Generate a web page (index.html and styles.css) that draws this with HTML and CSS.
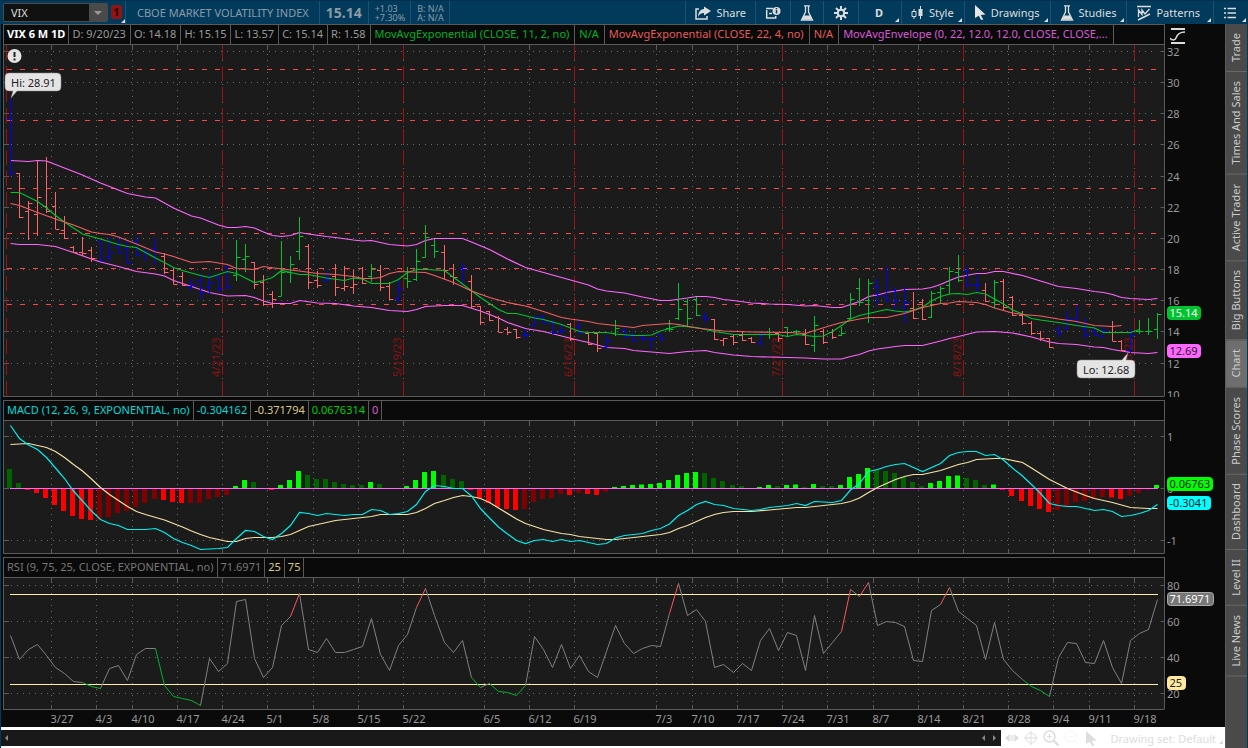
FILE: index.html
```html
<!DOCTYPE html>
<html lang="en">
  <head>
    <meta charset="UTF-8" />
    <meta name="viewport" content="width=device-width, initial-scale=1.0" />
    <title>VIX - Charts</title>
    <link rel="stylesheet" href="styles.css">
  </head>
  <body>
    <header class="topbar">
      <form class="symbol">
        <input type="text" class="symbol-input" value="VIX" aria-label="Symbol" />
        <button type="button" class="symbol-arrow" aria-label="Recent symbols"></button>
      </form>
      <button type="button" class="link-color has-menu" aria-label="Link color 1">1</button>
      <div class="quote-name">CBOE MARKET VOLATILITY INDEX</div>
      <div class="quote-last">15.14</div>
      <div class="quote-pair"><span>+1.03</span><span>+7.30%</span></div>
      <div class="quote-pair"><span>B: N/A</span><span>A: N/A</span></div>
      <nav class="tools">
        <button type="button" class="tool">
          <svg width="16" height="16" viewBox="0 0 16 16"><path d="M4 4H1v10h11v-3" fill="none" stroke="#ddd" stroke-width="1.5" /><path d="M9 1.500L16 6l-7 4.500V8C6 8 4 9.500 3 12c0-4 2-8 6-8z" fill="#ddd" /></svg>
          Share
        </button>
        <button type="button" class="tool" aria-label="Calendar">
          <svg width="16" height="16" viewBox="0 0 16 16"><path d="M1.700 5v8h9v-2M1 3.500h7M4 8.500h3" fill="none" stroke="#ddd" stroke-width="1.500" /><circle cx="11.500" cy="6" r="4" fill="#ddd" /><path d="M11.500 5v3.500M11.500 3v1.200" stroke="#023a5c" stroke-width="1.500" fill="none" /></svg>
        </button>
        <button type="button" class="tool" aria-label="Edit studies">
          <svg width="14" height="16" viewBox="0 0 14 16"><path d="M4 .8h6M5.500 1v6L1.500 15h11L8.500 7V1" fill="none" stroke="#ddd" stroke-width="1.300" /><path d="M4 10.500h6l2 4H2z" fill="#ddd" /></svg>
        </button>
        <button type="button" class="tool tool-gear" aria-label="Chart settings">
          <svg width="14" height="14" viewBox="0 0 14 14"><g stroke="#ddd" stroke-width="2"><path d="M7 0v3.500M7 10.500V14M0 7h3.500M10.500 7H14M2 2l2.500 2.500M9.500 9.500L12 12M12 2L9.500 4.500M4.500 9.500L2 12" /></g><circle cx="7" cy="7" r="3.200" fill="none" stroke="#ddd" stroke-width="2" /></svg>
        </button>
        <button type="button" class="tool tool-period has-menu">D</button>
        <button type="button" class="tool has-menu">
          <svg width="13" height="14" viewBox="0 0 13 14"><path d="M3 3v10M9.500 0v13" stroke="#ddd" /><path d="M1 5.500h4v5H1z" fill="#023a5c" stroke="#ddd" /><path d="M7.500 3h4v7h-4z" fill="#ddd" /></svg>
          Style
        </button>
        <button type="button" class="tool has-menu">
          <svg width="12" height="15" viewBox="0 0 12 15"><path d="M1 0l10.500 9.500-4.800.6L9.300 14.500l-2.200.5-2.300-4.300L1 13z" fill="#e6e6e6" /></svg>
          Drawings
        </button>
        <button type="button" class="tool has-menu">
          <svg width="14" height="16" viewBox="0 0 14 16"><path d="M4 .8h6M5.500 1v6L1.500 15h11L8.500 7V1" fill="none" stroke="#ddd" stroke-width="1.300" /><path d="M4 10.500h6l2 4H2z" fill="#ddd" /></svg>
          Studies
        </button>
        <button type="button" class="tool tool-wide has-menu">
          <svg width="14" height="16" viewBox="0 0 14 16"><path d="M0 1.500h14M1 15l12-6" stroke="#ddd" stroke-width="1.500" /><path d="M1.500 12V5l3.500 4.500V5l3 4 4.500-5" fill="none" stroke="#ddd" stroke-width="1.300" /></svg>
          Patterns
        </button>
        <button type="button" class="tool tool-list has-menu" aria-label="List">
          <svg width="12" height="12" viewBox="0 0 12 12"><path d="M0 1.500h2M0 6h2M0 10.500h2M3.500 1.500H12M3.500 6H12M3.500 10.500H12" stroke="#ddd" stroke-width="1.500" /></svg>
        </button>
      </nav>
    </header>

    <div class="workspace">
      <main class="charts">
        <section class="panel">
          <div class="legend-row">
            <div class="legend">
              <b>VIX 6 M 1D</b>
              <span>D: 9/20/23</span>
              <span>O: 14.18</span>
              <span>H: 15.15</span>
              <span>L: 13.57</span>
              <span>C: 15.14</span>
              <span>R: 1.58</span>
              <span class="study green">MovAvgExponential (CLOSE, 11, 2, no)</span>
              <span class="study green">N/A</span>
              <span class="study red">MovAvgExponential (CLOSE, 22, 4, no)</span>
              <span class="study red">N/A</span>
              <span class="study magenta">MovAvgEnvelope (0, 22, 12.0, 12.0, CLOSE, CLOSE,...</span>
            </div>
            <button type="button" class="scale-button" aria-label="Price axis settings">
              <svg width="16" height="16" viewBox="0 0 16 16"><path d="M1 1h14M1 15h14" stroke="#ddd" stroke-width="2" /><path d="M0 10c1 2 5 3 6 0s3-6 9-6" fill="none" stroke="#ddd" stroke-width="1.500" /></svg>
            </button>
          </div>
          <svg class="plot plot-price" id="price"></svg>
        </section>

        <section class="panel">
          <div class="legend-row">
            <div class="legend">
              <span class="cyan">MACD (12, 26, 9, EXPONENTIAL, no)</span>
              <span class="cyan">-0.304162</span>
              <span class="sand">-0.371794</span>
              <span class="lime">0.0676314</span>
              <span class="magenta">0</span>
            </div>
          </div>
          <svg class="plot plot-macd" id="macd"></svg>
        </section>

        <section class="panel">
          <div class="legend-row">
            <div class="legend">
              <span class="dim">RSI (9, 75, 25, CLOSE, EXPONENTIAL, no)</span>
              <span class="dim">71.6971</span>
              <span class="sand">25</span>
              <span class="sand">75</span>
            </div>
          </div>
          <svg class="plot plot-rsi" id="rsi"></svg>
        </section>

        <footer class="bottombar">
          <div class="scrollbar">
            <button type="button" class="arrow-left" aria-label="Scroll to start"></button>
            <span class="track"></span>
            <button type="button" class="arrow-left" aria-label="Scroll left"></button>
            <button type="button" class="arrow-right" aria-label="Scroll right"></button>
          </div>
          <div class="drawing-tools">
            <button type="button" aria-label="Expand"><svg width="14" height="14" viewBox="0 0 14 14"><path d="M0 7l4.500-4v8zM14 7L9.500 3v8z" fill="#ddd" /><path d="M6 4v6M8 4v6" stroke="#ddd" /></svg></button>
            <button type="button" aria-label="Crosshair"><svg width="14" height="14" viewBox="0 0 14 14"><circle cx="7" cy="7" r="5" fill="none" stroke="#ddd" /><path d="M7 0v14M0 7h14" stroke="#ddd" /></svg></button>
            <button type="button" aria-label="Zoom in"><svg width="16" height="16" viewBox="0 0 16 16"><circle cx="6.500" cy="6.500" r="5.500" fill="none" stroke="#ddd" stroke-width="1.500" /><path d="M10.500 10.500l5 5" stroke="#ddd" stroke-width="2" /><path d="M6.500 4v5M4 6.500h5" stroke="#ddd" /></svg></button>
            <button type="button" aria-label="Zoom out"><svg width="16" height="16" viewBox="0 0 16 16"><circle cx="6.500" cy="6.500" r="5.500" fill="none" stroke="#f6f6f6" /><path d="M10.500 10.500l5 5M4 6.500h5" stroke="#f6f6f6" /></svg></button>
            <button type="button" aria-label="Pointer"><svg width="12" height="15" viewBox="0 0 12 15"><path d="M1 0l10.500 9.500-4.800.6L9.300 14.500l-2.200.5-2.300-4.300L1 13z" fill="#ddd" /></svg></button>
            <button type="button" class="drawing-set has-menu">Drawing set: Default</button>
          </div>
        </footer>
      </main>

      <aside class="side-tabs">
        <button type="button">Trade</button>
        <button type="button">Times And Sales</button>
        <button type="button">Active Trader</button>
        <button type="button">Big Buttons</button>
        <button type="button" class="active">Chart</button>
        <button type="button">Phase Scores</button>
        <button type="button">Dashboard</button>
        <button type="button">Level II</button>
        <button type="button">Live News</button>
        <span class="tabs-rest"></span>
      </aside>
    </div>

    <script src="charts.js"></script>
  </body>
</html>
```

FILE: styles.css
```css
* {
  box-sizing: border-box;
}
body {
  margin: 0;
  min-height: 100vh;
  display: flex;
  flex-direction: column;
  font-family: "Noto Sans", sans-serif;
  font-size: 11px;
  color: #999;
  background: #0a0a0a;
  border-bottom: 1px solid #023a5c;
}
button,
input {
  font: inherit;
  color: inherit;
  margin: 0;
  padding: 0;
  border: none;
  background: none;
}

/* top bar */
.topbar {
  display: flex;
  height: 24px;
  background: #023a5c;
  border-top: 1px solid #022f4b;
  color: #8a9ba6;
}
.symbol {
  display: flex;
  width: 105px;
  height: 19px;
  margin: 2px 3px 0 3px;
  background: #111;
  border: 1px solid #4a4a4a;
  border-radius: 2px;
}
.symbol-input {
  flex: 1;
  min-width: 0;
  padding-left: 7px;
  color: #ddd;
}
.symbol-arrow {
  width: 18px;
  background: #4a4a4a;
}
.symbol-arrow::after {
  content: "";
  display: block;
  width: 0;
  margin: 0 auto;
  border: 4px solid transparent;
  border-top-color: #999;
  border-bottom: none;
}
.link-color {
  width: 11px;
  height: 14px;
  margin: 4px 3px 0 0;
  border-radius: 2px;
  background: #8f1414;
  color: #300;
  font-weight: bold;
  line-height: 14px;
}
.quote-name,
.quote-last,
.quote-pair {
  display: flex;
  align-items: center;
  border-left: 1px solid #1d5074;
}
.quote-name {
  padding: 0 10px 0 11px;
}
.quote-last {
  padding: 0 6px;
  font-size: 14px;
  font-weight: bold;
}
.quote-pair {
  flex-direction: column;
  align-items: flex-start;
  justify-content: center;
  padding: 0 5px 0 6px;
  font-size: 9px;
  line-height: 9px;
}
.quote-pair:nth-child(6) {
  border-right: 1px solid #1d5074;
}
.tools {
  display: flex;
  margin-left: auto;
  color: #ddd;
}
.tool {
  display: flex;
  align-items: center;
  gap: 5px;
  padding: 0 9px;
  border-left: 1px solid #1d5074;
}
.tool.has-menu {
  padding-right: 10px;
}
.tool-gear {
  padding: 0 10px;
}
.tool-period.has-menu {
  padding: 0 18px 0 16px;
  font-weight: bold;
}
.tool-wide.has-menu {
  padding: 0 13px 0 10px;
}
.tool-list.has-menu {
  padding: 0 12px 0 10px;
}
.has-menu {
  position: relative;
}
.has-menu::after {
  content: "";
  position: absolute;
  right: 2px;
  bottom: 2px;
  border-left: 4px solid transparent;
  border-bottom: 4px solid #ddd;
}
.link-color.has-menu::after {
  right: -3px;
  bottom: -4px;
}

/* panels */
.workspace {
  flex: 1;
  display: flex;
  border-left: 1px solid #023a5c;
  border-right: 1px solid #023a5c;
}
.charts {
  flex: 1;
  min-width: 0;
  display: flex;
  flex-direction: column;
}
.panel {
  margin-left: 2px;
}
.panel + .panel {
  margin-top: 3px;
}
.legend-row {
  display: flex;
}
.legend {
  flex: 1;
  display: flex;
  height: 21px;
  overflow: hidden;
  white-space: nowrap;
  line-height: 17px;
  border: 1px solid #5a5a5a;
}
.legend b,
.legend span {
  padding: 0 3px;
  border-right: 1px solid #5a5a5a;
}
.legend b {
  color: #fff;
}
.legend b ~ span {
  padding: 0 4px 0 3px;
}
.legend b ~ .study {
  padding: 0 5px 0 4px;
}
.scale-button {
  width: 60px;
  padding: 2px 0 0 5px;
  text-align: left;
}
.scale-button svg {
  display: block;
}
.legend-row:not(:has(.scale-button))::after {
  content: "";
  width: 60px;
}
.green {
  color: #00b02a;
}
.red {
  color: #e45c5c;
}
.magenta {
  color: #d65cd6;
}
.cyan {
  color: #00d8d8;
}
.sand {
  color: #d9c88e;
}
.lime {
  color: #0c0;
}
.dim {
  color: #777;
}

.plot {
  display: block;
  width: 100%;
}
.plot-price {
  height: 352px;
}
.plot-macd {
  height: 133px;
}
.plot-rsi {
  height: 149px;
}
.plot text {
  font-size: 11px;
  fill: #999;
}
.plot .expiry {
  fill: #8a1212;
}
.plot .on-light {
  fill: #222;
}
.plot .on-dark {
  fill: #fff;
}

/* bottom bar */
.bottombar {
  flex: 1;
  min-height: 20px;
  display: flex;
  padding: 3px 0 4px;
  background: #fff;
  color: #ddd;
}
.scrollbar {
  flex: 1;
  display: flex;
  align-items: center;
  gap: 8px;
  padding: 0 5px 0 4px;
  background: #191919;
}
.track {
  flex: 1;
}
.arrow-left,
.arrow-right {
  border: 3px solid transparent;
}
.arrow-left {
  border-right-color: #888;
  border-left: none;
}
.arrow-right {
  border-left-color: #888;
  border-right: none;
}
.drawing-tools {
  display: flex;
  align-items: center;
  gap: 5px;
  padding-left: 4px;
}
.drawing-tools svg {
  display: block;
}
.drawing-set {
  margin-left: 9px;
  padding-right: 9px;
}

/* side tabs */
.side-tabs {
  display: flex;
  flex-direction: column;
  width: 22px;
  background: #4a4a4a;
  border-left: 1px solid #5a5a5a;
  color: #ccc;
}
.side-tabs button {
  writing-mode: vertical-rl;
  transform: rotate(180deg);
  padding: 9px 2px 9px 4px;
  border-top: 1px solid #686868;
}
.side-tabs .active {
  background: #6e6e6e;
}
.tabs-rest {
  flex: 1;
}
```

FILE: charts.js
```js
// Plot y values are pixels from the top of the window, x is the bar index.
const BARS = 128;
const AXIS = 61;

const GREEN = "#00c42e";
const RED = "#ff6464";
const BLUE = "#0000ff";
const MAGENTA = "#ff66ff";
const FRAME = "#5a5a5a";

const weeks = [
  [5, "3/27"], [10, "4/3"], [14, "4/10"], [19, "4/17"], [24, "4/24"],
  [29, "5/1"], [34, "5/8"], [39, "5/15"], [44, "5/22"], [53, "6/5"],
  [58, "6/12"], [63, "6/19"], [72, "7/3"], [76, "7/10"], [81, "7/17"],
  [86, "7/24"], [91, "7/31"], [96, "8/7"], [101, "8/14"], [106, "8/21"],
  [111, "8/28"], [116, "9/4"], [120, "9/11"], [125, "9/18"],
];

const expiries = [
  [24, "4/21/23"], [44, "5/19/23"], [63, "6/16/23"],
  [86, "7/21/23"], [106, "8/18/23"], [125, "9/15/23"],
];

// high, low, open, close, direction
const ohlc = `98 177 118 173 b,173 218 173 217 r,201 240 211 203 r,161 236 214 197 r,
157 213 206 211 r,192 229 206 229 r,216 239 230 238 r,246 253 247 252 r,
237 256 252 253 r,247 262 250 258 r,241 261 241 260 b,237 261 257 253 b,
237 253 247 252 b,240 264 249 263 b,237 255 241 255 b,249 261 251 252 b,
238 265 248 252 b,253 274 256 272 r,267 284 270 284 r,272 286 276 285 r,
279 291 286 285 b,274 299 280 293 b,274 294 287 282 b,275 292 276 288 b,
266 290 266 286 b,240 281 275 257 g,244 272 259 256 g,262 289 262 284 r,
275 306 282 304 r,291 308 294 299 r,241 296 296 272 g,256 283 272 264 g,
217 260 251 236 g,244 289 246 282 r,271 288 280 285 r,271 282 280 279 b,
264 296 276 287 r,266 291 288 286 r,270 294 287 284 r,267 284 278 283 r,
264 282 276 269 g,265 291 270 287 r,282 300 286 299 r,280 303 298 288 b,
267 288 278 281 g,249 281 279 261 g,225 257 257 237 g,239 258 245 251 g,
245 280 252 270 r,264 285 276 277 r,263 284 268 269 b,275 308 281 306 r,
306 325 306 322 r,311 321 311 320 r,316 332 317 332 r,327 335 329 332 r,
329 339 329 337 r,329 339 335 334 b,316 327 325 316 b,315 324 316 322 b,
320 334 323 333 b,324 334 330 331 b,323 341 324 339 r,321 333 326 333 b,
333 345 333 344 r,333 352 333 348 r,335 349 347 340 b,320 336 333 328 g,
327 338 330 336 b,332 342 334 340 b,334 342 337 339 b,338 349 338 338 b,
334 341 334 338 b,320 332 328 329 g,283 320 318 309 g,299 327 301 318 g,
297 316 299 315 g,312 323 316 318 b,319 340 319 339 r,338 346 340 338 r,
335 345 336 342 r,331 341 335 340 r,337 343 338 342 r,335 346 342 335 b,
328 339 334 334 g,333 342 333 338 r,327 337 327 332 g,330 335 331 331 g,
329 345 334 344 r,316 352 345 325 g,329 344 331 342 r,329 339 332 337 r,
327 336 335 333 g,293 319 318 299 g,278 306 288 302 g,279 323 300 283 g,
279 305 286 295 b,267 302 296 300 b,287 310 290 301 b,287 323 307 303 b,
292 319 308 318 r,299 320 302 319 r,291 318 317 293 g,286 303 292 288 g,
267 294 285 271 g,255 282 272 280 g,267 288 270 284 b,275 293 285 285 b,
283 302 290 301 r,280 308 302 282 g,279 311 281 307 r,296 316 297 315 r,
311 325 315 323 r,321 335 323 333 r,331 341 333 338 r,338 348 338 347 r,
325 337 329 332 b,311 329 329 319 b,305 324 319 325 b,318 339 328 334 b,
327 335 330 335 b,327 337 336 330 b,321 341 326 341 r,340 351 341 350 r,
329 353 350 335 b,320 334 331 331 g,318 335 331 331 g,313 339 329 314 g`
  .split(",")
  .map((row) => row.trim().split(" "));

// "index:y" pairs
const upperBand = `0:160.5 1:161 2:161.5 3:160.5 4:161 6:168 8:175 10:183 12:190
13:193.5 15:197 16:198 18:208 20:216 21:218 23:225 24:227.5 25:227.5 26:226.5
27:228 28:232 29:235.5 30:236.5 31:235.5 32:232.5 33:234 35:236.5 36:237.5
38:240 39:241 40:240.5 42:244.5 44:246 45:244.5 46:240.5 47:238.5 50:238.5
51:242 53:249.5 55:259 57:267.5 58:270 60:275 62:280 64:285 65:289 66:291
68:293 70:297 72:300.5 73:300.5 75:298 76:296.5 77:296.5 78:297.5 79:299.5
80:300.5 82:303 84:304 86:304.5 88:306 89:305.5 91:307.5 92:307.5 93:304.5
94:301.5 95:296.5 96:295 97:292.5 99:289.5 101:289 102:287.5 103:284.5
104:280.5 105:277 107:273.5 108:273.5 109:271.5 110:271.5 112:275.5 114:281
116:286.5 118:288.5 120:291.5 121:292.5 122:294.5 123:297.5 124:298.5
126:299.5 127:298.5`;

const lowerBand = `0:243.5 1:244.5 3:244.5 5:246.5 7:252.5 9:259 10:262 12:266.5
14:271.5 16:274 17:276 18:280.5 20:286.5 22:292.5 24:296 26:295.5 27:297.5
28:301 29:303.5 31:303.5 32:300.5 34:303 36:303.5 38:306 40:307.5 42:310.5
44:311.5 45:309.5 46:306.5 48:305.5 50:305.5 52:311 54:318 55:322.5 57:328.5
59:331.5 61:336 63:340.5 64:342.5 66:347.5 68:348.5 69:350.5 71:352 73:353.5
75:351.5 77:350.5 78:352.5 80:355 82:356.5 84:357 88:358 90:359 92:359
93:356.5 94:354.5 95:351 96:349 98:346.5 99:345.5 101:345.5 103:341 104:338.5
105:336.5 107:332 109:331.5 111:333 113:337 115:342 116:343.5 118:344.5
120:347 121:347.5 122:349.5 124:352.5 126:353.5 127:352.5`;

const ema11 = `0:192.5 1:192.5 3:201.5 4:208 5:215.5 6:222 8:234 10:239 12:244.5
13:246.5 14:247.5 16:258 17:262.5 18:267.5 19:270.5 21:275.5 22:277.5 24:271.5
25:273.5 27:282.5 28:280.5 29:277.5 30:270.5 32:274.5 33:274.5 35:278 37:280.5
38:278 39:279 40:283.5 42:283.5 43:279.5 44:272.5 45:269.5 46:269.5 48:270.5
50:284 52:297.5 54:309.5 55:313.5 56:313.5 58:318 59:319.5 61:324.5 63:331.5
64:332.5 66:332.5 67:334 69:335.5 70:335.5 71:335 72:331 73:328.5 74:326
76:327.5 78:331.5 80:334.5 85:334.5 86:336.5 87:334.5 89:336.5 90:336 91:331.5
92:325.5 93:319 94:315.5 96:311.5 97:309.5 98:311 99:312 100:310 101:307
102:301 103:296.5 104:294 105:293.5 106:294.5 107:292.5 108:294 109:299
110:304 111:310 112:314 113:318.5 114:320 116:322.5 118:325.5 120:328
121:332.5 124:332.5 125:329.5`;

const ema22 = `0:203.5 1:205.5 3:212.5 5:219 7:225 9:232 10:233.5 11:234.5 12:237
14:244 16:252 17:254 18:256.5 20:262.5 22:261.5 24:264.5 25:268.5 27:269.5
28:266.5 30:269 32:271 34:273.5 36:274.5 38:276.5 39:278.5 40:278.5 41:277.5
42:273.5 43:271.5 46:272.5 47:275.5 49:282.5 51:291 53:297.5 55:302.5 57:306
59:311.5 61:317.5 62:319 64:321.5 65:323.5 67:325.5 69:327.5 70:325.5 73:323.5
74:324.5 76:328 79:331 82:332 86:332.5 88:333.5 89:330.5 91:325 92:322.5
94:319 95:317.5 97:317.5 99:313.5 101:307.5 103:303.5 104:303 105:301.5
107:302.5 108:304.5 109:308 111:313 112:314.5 114:316 116:319 118:321.5
120:325.5 122:326.5 123:325.5`;

const histogram = [
  19, 5, -2, -5, -10, -17, -23, -28, -31, -32, -32, -29, -25, -23, -19, -15,
  -11, -12, -14, -15, -15, -15, -11, -9, -7, 2, 8, 6, 0, -2, 3, 8, 17, 13, 9, 9,
  6, 4, 3, 3, 6, 4, 0, 0, 2, 8, 16, 17, 13, 9, 7, -2, -10, -15, -19, -21, -22,
  -21, -14, -11, -10, -6, -7, -5, -6, -7, -4, 1, 2, 3, 3.5, 4, 5, 8, 13, 15, 16,
  15, 10, 7, 3, 2, 0, 1, 3, 2, 3, 3.5, 1, 4, 2, 2, 3, 11, 14, 20, 18, 17, 15,
  11, 6, 2, 5, 7, 12, 12.5, 10, 8, 3, 3.5, -2, -8, -13, -18, -21, -24, -22, -18,
  -14, -13, -11, -9, -9.5, -11, -8, -5, -2, 3,
];

const macdLine = `0:425.5 1:438.5 2:445 3:449.5 4:457.5 5:468 6:478.5 7:491 8:501
9:511 10:519.5 11:523.5 12:525.5 13:529.5 15:529.5 16:528.5 17:532.5 18:538.5
19:542.5 20:545.5 21:549.5 23:548.5 24:547.5 25:538.5 26:530.5 27:531.5
28:536.5 29:539.5 30:533.5 31:525.5 32:512.5 33:513.5 34:515.5 35:513.5
36:514.5 37:515.5 38:514.5 39:514.5 40:509.5 41:510.5 42:514.5 43:513.5
44:511.5 45:504.5 46:491.5 47:485.5 48:486.5 49:488.5 50:488.5 51:496 52:508.5
53:518 54:527 55:534 56:540.5 57:543.5 58:540.5 59:539.5 60:541.5 61:539.5
62:541.5 63:540.5 64:542.5 65:544.5 66:543.5 67:538 68:535.5 70:533.5 71:530.5
72:528.5 73:524 74:515.5 75:510.5 76:504.5 77:501.5 78:504.5 79:505.5 80:508.5
82:510.5 83:509.5 84:507.5 86:505.5 87:503.5 88:505.5 89:501.5 90:502 91:502.5
92:500.5 93:490 94:483.5 95:471.5 96:469.5 97:466.5 98:464.5 99:463.5
101:471.5 103:463.5 104:455.5 105:452.5 106:451.5 107:451.5 108:455.5
109:454.5 110:460 111:468 112:476 113:484.5 114:493.5 115:503.5 116:505.5
117:506.5 118:506.5 119:508.5 120:510.5 121:509.5 122:511.5 123:516.5
124:515.5 125:513.5 126:510.5 127:504.5`;

const signalLine = `0:444.5 2:443.5 3:445.5 4:447.5 5:451.5 6:457.5 7:464.5 8:471
9:479 10:487.5 11:494.5 12:500.5 13:506.5 14:511.5 15:514.5 17:520 19:527
20:531 21:534.5 22:537.5 23:539.5 24:541.5 25:541.5 26:538.5 27:537.5 29:537.5
30:536.5 31:534.5 32:530.5 33:526.5 34:524.5 36:520.5 38:518.5 40:516.5
41:514.5 44:514.5 45:512.5 46:508.5 47:503.5 48:500.5 49:497.5 50:495.5
51:496.5 52:498.5 53:502.5 54:508 56:519 57:523.5 59:529.5 61:533.5 62:534.5
63:536.5 65:538.5 66:539.5 67:539.5 69:537.5 71:535.5 72:534.5 73:532.5
74:528.5 75:525.5 77:517.5 78:514.5 79:512.5 80:511.5 82:511.5 84:510 87:507.5
88:507.5 90:505.5 92:503.5 93:501.5 94:498 95:492.5 96:487.5 97:483.5 98:479.5
99:476.5 100:474.5 101:474.5 103:470.5 105:464.5 106:462.5 107:459.5 109:458.5
110:458.5 112:462.5 113:468 115:479.5 116:484 117:488.5 119:495.5 120:498.5
122:502.5 124:507.5 126:508.5 127:508.5`;

const rsi = [
  635, 659, 649, 644, 655, 667, 673, 681, 682, 686, 688, 668, 665, 680, 654,
  648, 648, 685, 696, 698, 700, 705, 658, 671, 663, 601, 599, 658, 677, 667,
  625, 616, 593, 649, 652, 638, 652, 652, 649, 646, 618, 654, 670, 645, 634,
  607, 588, 615, 642, 652, 640, 677, 687, 683, 691, 692, 695, 685, 636, 649,
  667, 644, 668, 655, 671, 677, 651, 625, 643, 653, 648, 645, 646, 613, 583,
  615, 609, 621, 667, 664, 672, 663, 670, 640, 628, 650, 632, 635, 670, 615,
  653, 642, 631, 589, 596, 582, 625, 621, 622, 626, 660, 661, 610, 604, 587,
  611, 618, 625, 659, 622, 659, 670, 679, 686, 690, 696, 657, 642, 643, 662,
  663, 640, 667, 683, 640, 633, 629, 599,
];
const overbought = [31, 45, 73, 92, 94, 103];
const oversold = [8, 9, 16, 17, 18, 19, 20, 51, 53, 54, 55, 56, 112, 113, 114];

let width;

function x(i) {
  return Math.round(7 + (i * (width - 75)) / (BARS - 1)) + 0.5;
}

function line(x1, y1, x2, y2, stroke, extra = "") {
  return `<line x1="${x1}" y1="${y1}" x2="${x2}" y2="${y2}" stroke="${stroke}" ${extra}/>`;
}

function series(points, stroke) {
  const path = points
    .split(/\s+/)
    .map((p) => p.split(":"))
    .map(([i, y]) => `${x(+i)},${y}`)
    .join(" ");
  return `<polyline points="${path}" fill="none" stroke="${stroke}" stroke-width="1.2"/>`;
}

function text(tx, ty, label, cls = "") {
  return `<text x="${tx}" y="${ty}" class="${cls}">${label}</text>`;
}

function tag(y, w, label, fill, cls, stroke = fill) {
  const left = width - AXIS + 3.5;
  return (
    `<rect x="${left}" y="${y}.5" width="${w}" height="13" rx="3" fill="${fill}" stroke="${stroke}"/>` +
    text(left + 2, y + 11, label, cls)
  );
}

// dotted grid, ticks and axis labels; levels are [y, label]
function grid(top, bottom, levels) {
  const right = width - AXIS + 0.5;
  let out = `<rect x="0" y="${top}" width="${right}" height="${bottom - top}" fill="#1b1b1b"/>`;
  levels.forEach(([y, label]) => {
    out += line(2, y, right - 10, y, "#686868", 'stroke-dasharray="1 5"');
    out += line(0, y, 6, y, FRAME) + line(right - 4, y, right, y, FRAME);
    out += text(right + 2.5, y + 4.5, label);
  });
  weeks.forEach(([i]) => {
    const wx = Math.floor(x(i - 0.5)) + 0.5;
    out += line(wx, top + 3, wx, bottom, "#686868", 'stroke-dasharray="1 5"');
    out += line(wx, top, wx, top + 5, FRAME) + line(wx, bottom - 4, wx, bottom, FRAME);
  });
  out += line(0.5, top, 0.5, bottom, FRAME);
  out += line(right, top, right, bottom, FRAME);
  out += line(0, bottom + 0.5, right, bottom + 0.5, FRAME);
  return out;
}

function show(id, top, height, content) {
  const svg = document.getElementById(id);
  svg.setAttribute("viewBox", `0 ${top} ${width} ${height}`);
  svg.innerHTML = content;
}

function drawPrice() {
  const levels = [
    [51.5, 32], [82.5, 30], [113.5, 28], [144.5, 26], [176.5, 24], [207.5, 22],
    [238.5, 20], [269.5, 18], [300.5, 16], [331.5, 14], [363.5, 12],
  ];
  const right = width - AXIS;
  let out = grid(45, 396, levels) + text(right + 3, 399, 10);

  [69.5, 120.5, 188.5, 233.5, 268.5, 304.5].forEach((y) => {
    out += line(4, y, right - 5, y, "#ff4545", 'stroke-dasharray="5 8"');
  });
  out += line(3.5, 45, 3.5, 396, "#a01010", 'stroke-dasharray="15 6"');
  expiries.forEach(([i, label]) => {
    const ex = x(i - 0.5);
    out += line(ex, 45, ex, 396, "#a01010", 'stroke-dasharray="15 6"');
    out += `<text class="expiry" transform="translate(${ex - 3} 377) rotate(-90)">${label}</text>`;
  });

  out += series(upperBand, MAGENTA) + series(lowerBand, MAGENTA);
  const colors = { g: GREEN, r: RED, b: BLUE };
  ohlc.forEach(([high, low, open, close, dir], i) => {
    const bx = x(i);
    out += `<path d="M${bx} ${high}V${low}M${bx - 3.5} ${+open + 0.5}H${bx}M${bx} ${+close + 0.5}h4" stroke="${colors[dir]}"/>`;
  });
  out += series(ema11, GREEN) + series(ema22, "#f06060");

  out += `<circle cx="11.5" cy="56" r="7" fill="#e4e4e4"/><path d="M11.500 52v5M11.500 58.500v2" stroke="#222" stroke-width="2"/>`;
  out += `<path d="M6 73h48a4 4 0 0 1 4 4v10a4 4 0 0 1-4 4H14l-6 7 2-7H6a4 4 0 0 1-4-4V77a4 4 0 0 1 4-4z" fill="#e4e4e4" stroke="#888" stroke-width=".5"/>`;
  out += text(8, 87, "Hi: 28.91", "on-light");
  const lx = right - 87;
  out += `<path d="M${lx + 4} 360h41l6-7-2 7h5a4 4 0 0 1 4 4v10a4 4 0 0 1-4 4H${lx + 4}a4 4 0 0 1-4-4v-10a4 4 0 0 1 4-4z" fill="#e4e4e4" stroke="#888" stroke-width=".5"/>`;
  out += text(lx + 6, 374, "Lo: 12.68", "on-light");

  out += tag(306, 33, "15.14", GREEN, "on-dark");
  out += tag(344, 33, "12.69", MAGENTA, "on-light");
  show("price", 45, 352, out);
}

function drawMacd() {
  let out = grid(421, 553, [[436.5, 1], [488.5, 0], [540.5, -1]]);
  let previous = 20;
  histogram.forEach((value, i) => {
    const up = value > previous;
    const fill = value > 0 ? (up ? "#00ff00" : "#006400") : up || value === previous ? "#800000" : "#ff0000";
    const height = Math.abs(value);
    out += `<rect x="${x(i) - 3.5}" y="${value > 0 ? 488 - value : 488}" width="5" height="${height}" fill="${fill}"/>`;
    previous = value;
  });
  out += line(7, 488.5, width - 67, 488.5, MAGENTA);
  out += series(signalLine, "#f5e3a5") + series(macdLine, "#00f0f0");
  out += tag(477, 45, "0.06763", "#00ff00", "on-light");
  out += tag(496, 43, "-0.3041", "#00ffff", "on-light");
  show("macd", 421, 133, out);
}

function drawRsi() {
  let out = grid(578, 709, [[585.5, 80], [621.5, 60], [657.5, 40], [693.5, 20]]);
  [594.5, 684.5].forEach((y) => {
    out += line(7, y, width - 67, y, "#ffeea8");
  });
  for (let i = 0; i < BARS - 1; i++) {
    let stroke = "#808080";
    if (overbought.includes(i)) stroke = "#ff5555";
    if (oversold.includes(i)) stroke = "#00b42a";
    out += line(x(i), rsi[i] + 0.5, x(i + 1), rsi[i + 1] + 0.5, stroke);
  }
  weeks.forEach(([i, label]) => {
    out += text(x(i - 0.5) - 1, 723, label);
  });
  out += tag(592, 46, "71.6971", "#777", "on-dark", "#aaa");
  out += tag(676, 18, "25", "#ffe8a0", "on-light");
  show("rsi", 578, 149, out);
}

function draw() {
  width = document.getElementById("price").clientWidth;
  drawPrice();
  drawMacd();
  drawRsi();
}

window.addEventListener("resize", draw);
draw();
```
